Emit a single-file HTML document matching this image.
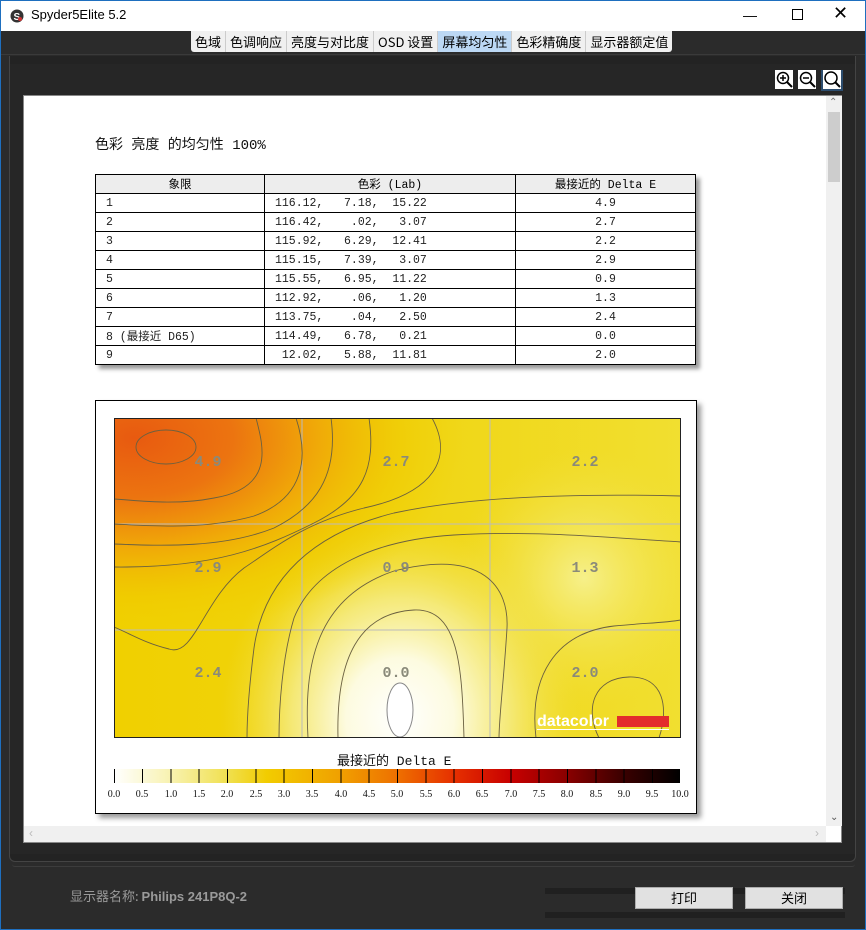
<!DOCTYPE html>
<html><head><meta charset="utf-8"><style>
*{margin:0;padding:0;box-sizing:border-box}
body{width:866px;height:930px;overflow:hidden;background:#2b2b2b;font-family:"Liberation Sans","Noto Sans CJK SC",sans-serif;position:relative}
.abs{position:absolute}
.title{left:0;top:0;width:866px;height:31px;background:#fff;border:1px solid #1e6fbf;border-bottom:none}
.tabs{left:191px;top:31px;height:21px;display:flex;background:#f0f0f0;border-radius:0 0 3px 3px}
.tabs div{font-size:13px;padding:1px 4px 1px 4px;border-right:1px solid #ccc;color:#000;line-height:19px;font-family:"Noto Sans CJK SC","Liberation Sans",sans-serif}
.tabs .on{background:#bcd8f4}
.mono{font-family:"Liberation Mono","Noto Sans CJK SC",monospace}
table{border-collapse:collapse;font-size:11.5px}
td{border:1px solid #000;height:19px;padding:0 0 0 10px;font-family:"Liberation Mono","Noto Sans CJK SC",monospace;white-space:pre;color:#222}
th{border:1px solid #000;height:19px;font-weight:normal;background:#ededed;font-family:"Liberation Mono","Noto Sans CJK SC",monospace;font-size:11.5px}
.btn{background:#e1e1e1;border:1px solid #adadad;font-size:13px;text-align:center;line-height:20px;font-family:"Noto Sans CJK SC",sans-serif}
.lbl{font:bold 15px "Liberation Mono",monospace;fill:#8a8a7a}
</style></head><body>
<div class="abs title">
  <svg class="abs" style="left:9px;top:8px" width="14" height="14"><circle cx="7" cy="7" r="6.5" fill="#333"/><text x="3.5" y="11" font-size="10" font-weight="bold" fill="#fff" font-family="Liberation Sans">S</text><circle cx="10" cy="10" r="2" fill="#c33"/></svg>
  <div class="abs" style="left:30px;top:6px;font-size:13px;color:#000">Spyder5Elite 5.2</div>
  <div class="abs" style="left:742px;top:6px;font-size:14px">&#8212;</div>
  <div class="abs" style="left:791px;top:8px;width:11px;height:11px;border:1px solid #000"></div>
  <div class="abs" style="left:832px;top:2px;font-size:18px;font-weight:300">&#10005;</div>
</div>
<div class="abs" style="left:0;top:31px;width:866px;height:899px;border-left:1px solid #1e6fbf;border-right:1px solid #1e6fbf;border-bottom:1px solid #1e6fbf"></div>
<div class="abs" style="left:1px;top:54px;width:864px;height:1px;background:#3a3a3a"></div>
<div class="abs tabs"><div>色域</div><div>色调响应</div><div>亮度与对比度</div><div>OSD 设置</div><div class="on">屏幕均匀性</div><div>色彩精确度</div><div style="border:none">显示器额定值</div></div>
<div class="abs" style="left:9px;top:56px;width:847px;height:806px;border:1px solid #444;border-top:none;border-radius:0 0 6px 6px;background:#232323"></div>
<div class="abs" style="left:10px;top:64px;width:845px;height:790px;background:#262626"></div>
<svg class="abs" style="left:775px;top:70px" width="70" height="22">
 <rect x="0" y="0" width="18" height="19" fill="#fff"/><circle cx="8" cy="8" r="5.5" fill="none" stroke="#000" stroke-width="1.5"/><path d="M5 8h6M8 5v6" stroke="#000" stroke-width="1.5"/><path d="M12 12l5 5" stroke="#000" stroke-width="2"/>
 <rect x="23" y="0" width="18" height="19" fill="#fff"/><circle cx="31" cy="8" r="5.5" fill="none" stroke="#000" stroke-width="1.5"/><path d="M28 8h6" stroke="#000" stroke-width="1.5"/><path d="M35 12l5 5" stroke="#000" stroke-width="2"/>
 <rect x="46" y="-1" width="22" height="22" fill="#2d4d6e"/><rect x="48" y="0" width="18" height="19" fill="#fff"/><circle cx="56" cy="8" r="6" fill="none" stroke="#000" stroke-width="1.5"/><path d="M60 12l5 5" stroke="#000" stroke-width="2"/>
</svg>
<div class="abs" style="left:23px;top:95px;width:819px;height:748px;background:#fff;border:1px solid #888"></div>
<div class="abs" style="left:826px;top:96px;width:16px;height:730px;background:#f0f0f0"></div>
<div class="abs" style="left:828px;top:112px;width:12px;height:70px;background:#cdcdcd"></div>
<div class="abs" style="left:829px;top:97px;font-size:10px;color:#777">&#8963;</div>
<div class="abs" style="left:830px;top:812px;font-size:10px;color:#555">&#8964;</div>
<div class="abs" style="left:24px;top:826px;width:802px;height:16px;background:#f0f0f0"></div>
<div class="abs" style="left:29px;top:826px;font-size:12px;color:#bbb">&lsaquo;</div>
<div class="abs" style="left:815px;top:826px;font-size:12px;color:#bbb">&rsaquo;</div>

<div class="abs mono" style="left:95px;top:134px;font-size:14px;color:#111">色彩 亮度 的均匀性 100%</div>
<div class="abs" style="left:95px;top:174px;box-shadow:4px 4px 4px #999">
<table>
<tr><th style="width:169px">象限</th><th style="width:251px">色彩 (Lab)</th><th style="width:180px">最接近的 Delta E</th></tr>
<tr><td>1</td><td>116.12,   7.18,  15.22</td><td style="text-align:center;padding:0">4.9</td></tr>
<tr><td>2</td><td>116.42,    .02,   3.07</td><td style="text-align:center;padding:0">2.7</td></tr>
<tr><td>3</td><td>115.92,   6.29,  12.41</td><td style="text-align:center;padding:0">2.2</td></tr>
<tr><td>4</td><td>115.15,   7.39,   3.07</td><td style="text-align:center;padding:0">2.9</td></tr>
<tr><td>5</td><td>115.55,   6.95,  11.22</td><td style="text-align:center;padding:0">0.9</td></tr>
<tr><td>6</td><td>112.92,    .06,   1.20</td><td style="text-align:center;padding:0">1.3</td></tr>
<tr><td>7</td><td>113.75,    .04,   2.50</td><td style="text-align:center;padding:0">2.4</td></tr>
<tr><td>8 (最接近 D65)</td><td>114.49,   6.78,   0.21</td><td style="text-align:center;padding:0">0.0</td></tr>
<tr><td>9</td><td> 12.02,   5.88,  11.81</td><td style="text-align:center;padding:0">2.0</td></tr>
</table></div>

<div class="abs" style="left:95px;top:400px;width:602px;height:414px;border:1px solid #000;background:#fff;box-shadow:4px 4px 5px #999"></div>
<svg class="abs" style="left:114px;top:418px" width="567" height="320">
<defs>
<radialGradient id="o" cx="20" cy="20" r="330" gradientUnits="userSpaceOnUse" gradientTransform="translate(20 20) scale(1 0.6) translate(-20 -20)"><stop offset="0" stop-color="#e85a10"/><stop offset="0.3" stop-color="#ec7410"/><stop offset="0.55" stop-color="#f0a808"/><stop offset="0.8" stop-color="#f0c800" stop-opacity=".6"/><stop offset="1" stop-color="#f0d000" stop-opacity="0"/></radialGradient>
<radialGradient id="w" cx="286" cy="300" r="200" gradientUnits="userSpaceOnUse" gradientTransform="translate(286 300) scale(0.9 1) translate(-286 -300)"><stop offset="0" stop-color="#fff"/><stop offset="0.3" stop-color="#fdfbe0"/><stop offset="0.6" stop-color="#f6ee90" stop-opacity=".8"/><stop offset="1" stop-color="#f2e040" stop-opacity="0"/></radialGradient>
<radialGradient id="r" cx="470" cy="160" r="130" gradientUnits="userSpaceOnUse"><stop offset="0" stop-color="#f6f08a"/><stop offset="1" stop-color="#f2e040" stop-opacity="0"/></radialGradient>
<linearGradient id="bg" x1="0" x2="1"><stop offset="0" stop-color="#f0d000"/><stop offset="0.45" stop-color="#f0d410"/><stop offset="1" stop-color="#f1df30"/></linearGradient>
</defs>
<rect width="567" height="320" fill="url(#bg)"/>
<rect width="567" height="320" fill="url(#r)"/>
<rect width="567" height="320" fill="url(#w)"/>
<rect width="567" height="320" fill="url(#o)"/>
<g stroke="#bbb" stroke-width="1"><path d="M188 0V320M376 0V320M0 106H567M0 212H567"/></g>
<g fill="none" stroke="#6a6040" stroke-width="0.9">
<ellipse cx="52" cy="29" rx="30" ry="17"/>
<path d="M142,0 C150,30 160,70 100,80 C60,88 20,82 0,81"/>
<path d="M182,0 C195,40 190,80 140,98 C90,112 40,108 0,106"/>
<path d="M217,0 C225,60 200,90 160,110 C110,130 50,128 0,126"/>
<path d="M255,0 C262,50 250,80 200,105 C150,130 100,150 0,149"/>
<path d="M318,0 C340,40 320,75 250,90 C190,105 160,130 130,150 C90,180 80,240 55,231 C30,225 15,215 0,209"/>
<path d="M567,78 C450,75 350,80 280,95 C200,115 150,160 140,230 C135,270 133,300 133,320"/>
<path d="M567,124 C500,120 420,112 340,117 C260,122 200,150 180,200 C168,240 165,290 165,320"/>
<path d="M194,320 C190,250 200,180 280,153 C370,130 395,170 393,210 C390,260 385,300 385,320"/>
<path d="M224,320 C222,240 245,195 300,192 C345,190 348,250 350,320"/>
<path d="M422,320 C415,260 440,215 500,208 C530,205 550,205 567,202"/>
<path d="M485,320 C470,290 480,260 515,259 C550,258 555,290 545,320"/>
</g>
<ellipse cx="286" cy="292" rx="13" ry="27" fill="#fff" stroke="#888"/>
<g class="lbl" text-anchor="middle">
<text x="94" y="48">4.9</text><text x="282" y="48">2.7</text><text x="471" y="48">2.2</text>
<text x="94" y="154">2.9</text><text x="282" y="154">0.9</text><text x="471" y="154">1.3</text>
<text x="94" y="259">2.4</text><text x="282" y="259">0.0</text><text x="471" y="259">2.0</text>
</g>
<text x="423" y="308" font-family="Liberation Sans" font-weight="bold" font-size="16" fill="#fff">datacolor</text>
<rect x="503" y="298" width="52" height="11" fill="#e32c2c"/>
<rect x="423" y="311" width="132" height="1" fill="#fff"/>
<rect x="0.5" y="0.5" width="566" height="319" fill="none" stroke="#222"/>
</svg>
<div class="abs mono" style="left:337px;top:750px;font-size:13px;color:#111">最接近的 Delta E</div>
<svg class="abs" style="left:100px;top:766px" width="600" height="40">
<defs><linearGradient id="lg" x1="0" x2="1"><stop offset="0" stop-color="#fff"/><stop offset=".1" stop-color="#f8f2b0"/><stop offset=".2" stop-color="#f0e050"/><stop offset=".27" stop-color="#f2cc00"/><stop offset=".4" stop-color="#f0a000"/><stop offset=".5" stop-color="#ee7000"/><stop offset=".6" stop-color="#e63000"/><stop offset=".7" stop-color="#c80000"/><stop offset=".8" stop-color="#8a0000"/><stop offset=".9" stop-color="#3a0000"/><stop offset="1" stop-color="#000"/></linearGradient></defs>
<rect x="14" y="3" width="566" height="14" fill="url(#lg)"/>
<g stroke="#000" stroke-width="1">
<path d="M14.5 3v14M42.5 3v14M71 3v14M99 3v14M127.5 3v14M156 3v14M184 3v14M212.5 3v14M241 3v14M269 3v14M297.5 3v14M326 3v14M354 3v14M382.5 3v14M411 3v14M439 3v14M467.5 3v14M496 3v14M524 3v14M552.5 3v14"/></g>
<g font-family="Liberation Serif" font-size="10" fill="#111" text-anchor="middle">
<text x="14" y="31">0.0</text><text x="42" y="31">0.5</text><text x="71" y="31">1.0</text><text x="99" y="31">1.5</text><text x="127" y="31">2.0</text><text x="156" y="31">2.5</text><text x="184" y="31">3.0</text><text x="212" y="31">3.5</text><text x="241" y="31">4.0</text><text x="269" y="31">4.5</text><text x="297" y="31">5.0</text><text x="326" y="31">5.5</text><text x="354" y="31">6.0</text><text x="382" y="31">6.5</text><text x="411" y="31">7.0</text><text x="439" y="31">7.5</text><text x="467" y="31">8.0</text><text x="496" y="31">8.5</text><text x="524" y="31">9.0</text><text x="552" y="31">9.5</text><text x="580" y="31">10.0</text></g>
</svg>
<div class="abs" style="left:12px;top:864px;width:843px;height:3px;border-bottom:1px solid #3c3c3c;border-radius:0 0 4px 4px"></div>
<div class="abs" style="left:70px;top:886px;font-size:13px;color:#9a9a9a;font-family:'Noto Sans CJK SC',sans-serif">显示器名称: <b style="font-family:'Liberation Sans'">Philips 241P8Q-2</b></div>
<div class="abs" style="left:545px;top:888px;width:300px;height:6px;background:#202020"></div>
<div class="abs" style="left:545px;top:912px;width:300px;height:6px;background:#202020"></div>
<div class="abs btn" style="left:635px;top:887px;width:98px;height:22px">打印</div>
<div class="abs btn" style="left:745px;top:887px;width:98px;height:22px">关闭</div>
</body></html>
